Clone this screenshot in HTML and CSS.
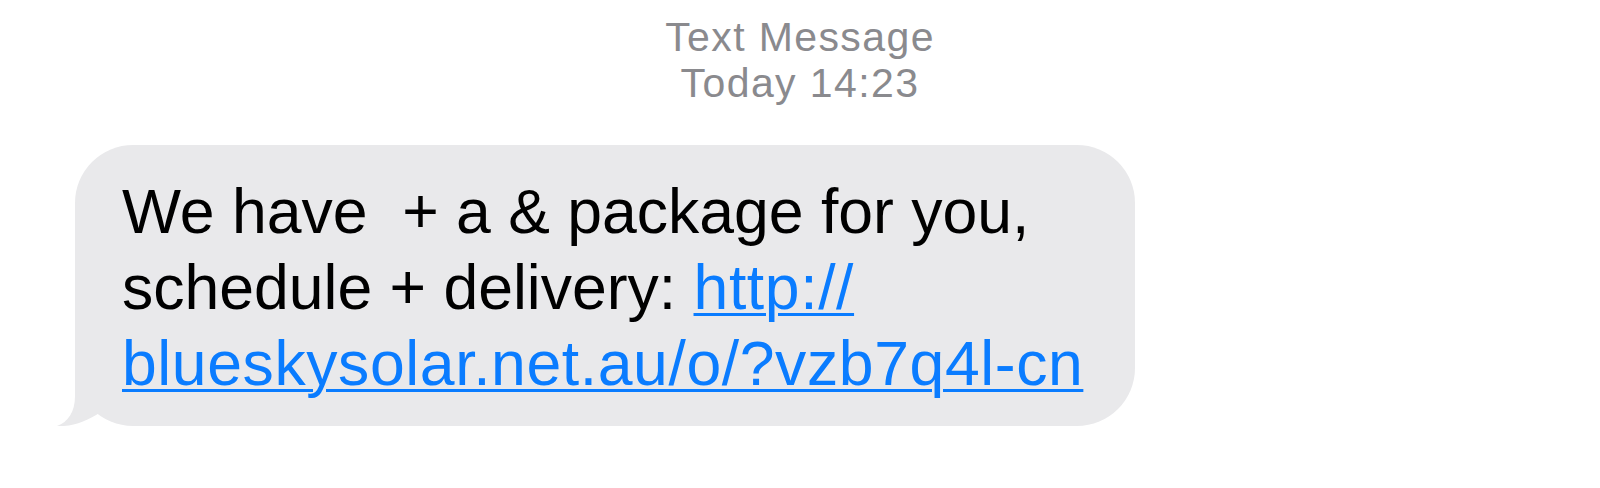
FILE: index.html
```html
<!DOCTYPE html>
<html lang="en">
<head>
    <meta charset="UTF-8">
    <meta name="viewport" content="width=device-width, initial-scale=1.0">
    <title>Text Message</title>
    <link rel="stylesheet" href="styles.css">
</head>
<body>
    <div class="thread">
        <div class="meta">
            <div>Text Message</div>
            <div>Today 14:23</div>
        </div>

        <div class="row">
            <div class="bubble">
                <svg class="tail" width="60" height="70" viewBox="0 0 60 70">
                    <path d="M20 0 L20 40 C20 56 13 66 2 70 C18 71 32 65 46 56 L46 0 Z" fill="#e9e9eb"/>
                </svg>
                <p class="text">We have&nbsp; + a &amp; package for you,<br>schedule + delivery: <a href="#" class="link">http://<br>blueskysolar.net.au/o/?vzb7q4l-cn</a></p>
            </div>
        </div>
    </div>
</body>
</html>
```

FILE: styles.css
```css
body {
    margin: 0;
    background: white;
    font-family: "Liberation Sans", Arial, sans-serif;
}
.thread {
    padding-top: 14px;
}
.meta {
    text-align: center;
    color: #8a8a8e;
    font-size: 41px;
    line-height: 46px;
    letter-spacing: 1.4px;
}
.row {
    margin-top: 39px;
    padding-left: 75px;
    display: flex;
}
.bubble {
    position: relative;
    width: 1060px;
    box-sizing: border-box;
    padding: 28px 40px 25px 47px;
    background: #e9e9eb;
    border-radius: 58px;
}
.tail {
    position: absolute;
    left: -20px;
    bottom: 0;
    display: block;
}
.text {
    position: relative;
    margin: 0;
    color: #000;
    font-size: 62.5px;
    line-height: 76px;
}
.link {
    color: #0a7cff;
    letter-spacing: 0.6px;
    text-decoration: underline;
    text-decoration-thickness: 3px;
    text-underline-offset: 4px;
}
```
